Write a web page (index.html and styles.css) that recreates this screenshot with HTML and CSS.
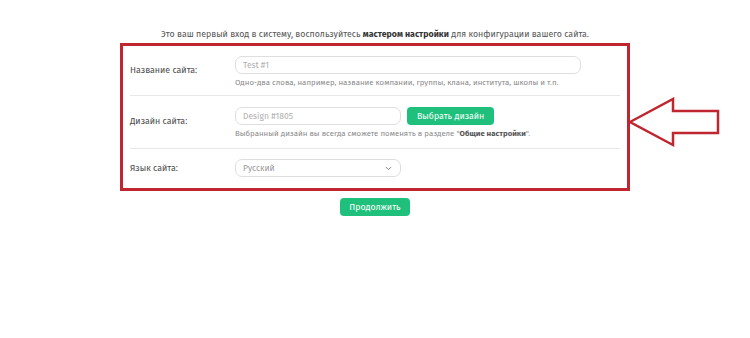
FILE: index.html
```html
<!DOCTYPE html>
<html lang="ru">

<head>
  <title>Мастер настройки</title>
  <link rel="stylesheet" href="styles.css">
</head>

<body>

  <main class="wizard">
    <p class="intro">Это ваш первый вход в систему, воспользуйтесь <b>мастером настройки</b> для конфигурации вашего сайта.</p>

    <form class="setup">
      <div class="row">
        <label class="label" for="site-name">Название сайта:</label>
        <div class="field">
          <input id="site-name" class="input wide" type="text" placeholder="Test #1">
          <p class="hint">Одно-два слова, например, название компании, группы, клана, института, школы и т.п.</p>
        </div>
      </div>

      <div class="row">
        <label class="label" for="site-design">Дизайн сайта:</label>
        <div class="field">
          <div class="inline">
            <input id="site-design" class="input short" type="text" placeholder="Design #1805">
            <button type="button" class="btn">Выбрать дизайн</button>
          </div>
          <p class="hint">Выбранный дизайн вы всегда сможете поменять в разделе "<b>Общие настройки</b>".</p>
        </div>
      </div>

      <div class="row">
        <label class="label" for="site-lang">Язык сайта:</label>
        <div class="field">
          <div class="select short">
            <span>Русский</span>
            <svg width="9" height="9" viewBox="0 0 24 24" fill="none" stroke="currentColor" stroke-width="2.5"
              stroke-linecap="round" stroke-linejoin="round">
              <path d="m6 9 6 6 6-6" />
            </svg>
          </div>
        </div>
      </div>

      <svg class="arrow" width="94" height="52" viewBox="0 0 94 52" fill="none" stroke="#c0262f" stroke-width="2.5"
        stroke-linejoin="miter">
        <path d="M3 25 L46 2 L46 14 L91 14 L91 36 L46 36 L46 48 Z" />
      </svg>
    </form>

    <button type="button" class="btn next">Продолжить</button>
  </main>

</body>

</html>
```

FILE: styles.css
```css
body {
  margin: 0;
  font-family: "Fira Sans", "Roboto", "Noto Sans", sans-serif;
  color: #444;
  background-color: #fff;
}

.wizard {
  display: flex;
  flex-flow: column;
  align-items: center;
  padding-block-start: 28px;
}

.intro {
  margin: 0;
  font-size: 8.8px;
  line-height: 12px;
  color: #555;

  b {
    color: #333;
  }
}

.setup {
  position: relative;
  box-sizing: border-box;
  inline-size: 510px;
  margin-block-start: 3px;
  border: 3px solid #c0262f;
  padding-inline: 7px;
}

.row {
  display: grid;
  grid-template-columns: 105px 1fr;
  align-items: center;
  padding-block: 10px 8px;
  border-block-end: 1px solid #e8e8e8;

  &:nth-child(2) {
    padding-block: 11px 10px;
  }

  &:nth-child(3) {
    border: 0;
    padding-block: 10px 11px;
  }

  &:has(.hint) .label {
    margin-block-end: 3px;
  }
}

.label {
  font-size: 8.8px;
  color: #4a4a4a;
}

.field {
  display: flex;
  flex-flow: column;
  gap: 4px;
}

.inline {
  display: flex;
  gap: 6px;
}

.input,
.select {
  box-sizing: border-box;
  block-size: 18px;
  border: 1px solid #dedede;
  border-radius: 7px;
  padding: 0 7px;
  font-family: inherit;
  font-size: 8.5px;
  color: #555;
  background-color: #fff;

  &::placeholder {
    color: #b0b0b0;
  }
}

.wide {
  inline-size: 346px;
}

.short {
  inline-size: 166px;
}

.select {
  display: flex;
  justify-content: space-between;
  align-items: center;
  color: #999;

  svg {
    color: #777;
  }
}

.hint {
  margin: 0;
  font-size: 7.85px;
  line-height: 9px;
  color: #8a8a8a;

  b {
    color: #555;
  }
}

.btn {
  block-size: 18px;
  border: 0;
  border-radius: 4px;
  padding: 0 10px;
  background-color: #1ec07b;
  color: #fff;
  font-family: inherit;
  font-size: 8.8px;
  font-weight: 400;
  cursor: pointer;
}

.next {
  margin-block-start: 7px;
  padding: 0 9px;
}

.arrow {
  position: absolute;
  inset-block-start: 51px;
  inset-inline-start: 504px;
}
```
